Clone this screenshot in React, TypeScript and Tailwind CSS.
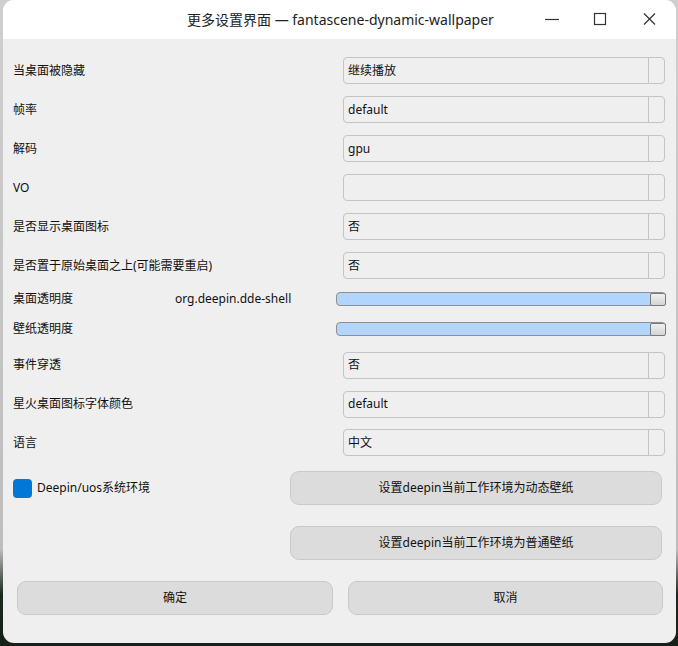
import React from "react";

const FONT = "font-['Noto_Sans','Noto_Sans_CJK_SC',sans-serif]";

function Combo({ value }: { value: string }) {
  return (
    <div className="w-[322px] h-[27px] rounded-[4px] border border-[#c4c4c4] bg-[#efefef] flex items-center">
      <span className="flex-1 pl-[4px] text-[12px] text-[#111] truncate">{value}</span>
      <div className="w-[16px] h-full border-l border-[#c4c4c4]" />
    </div>
  );
}

function Slider() {
  return (
    <div className="w-[330px] h-[14px] rounded-[4px] border border-[#8f8f8f] bg-[#b1d5fd] flex justify-end items-center">
      <div className="w-[16px] h-[13px] rounded-[2px] border border-[#7a7a7a] bg-[linear-gradient(#f0f0f0,#d4d4d4)] -mr-px" />
    </div>
  );
}

function Row({ label, children, h = "h-[39px]", mid }: { label: string; children: React.ReactNode; h?: string; mid?: string }) {
  return (
    <div className={`flex items-center ${h}`}>
      <span className="w-[172px] pl-[10px] text-[12px] text-[#111] whitespace-nowrap">{label}</span>
      <span className="w-[168px] text-[12px] text-[#111] whitespace-nowrap">{mid}</span>
      {children}
    </div>
  );
}

export default function App() {
  return (
    <div className={`w-[678px] h-[646px] bg-[linear-gradient(#cfcfcf_0%,#bdbdbd_85%,#1c2a1e_92%,#142018_100%)] ${FONT}`}>
      <div className="ml-[3px] w-[673px] h-[643px] rounded-[11px] overflow-hidden bg-[#efefef] flex flex-col">
        {/* title bar */}
        <div className="h-[39px] bg-white flex items-center relative shrink-0">
          <span className="absolute left-[184px] text-[14px] text-[#222]">更多设置界面 — fantascene-dynamic-wallpaper</span>
          <div className="ml-auto flex items-center text-[#333]">
            <svg width="48" height="39" viewBox="0 0 48 39"><path d="M17 19.5h14" stroke="#333" strokeWidth="1.2" /></svg>
            <svg width="48" height="39" viewBox="0 0 48 39"><rect x="18.5" y="13.5" width="11" height="11" fill="none" stroke="#333" strokeWidth="1.2" /></svg>
            <svg width="52" height="39" viewBox="0 0 52 39"><path d="M20 13.5l11 11M31 13.5l-11 11" stroke="#333" strokeWidth="1.2" /></svg>
          </div>
        </div>

        {/* body */}
        <div className="flex flex-col pt-[12px]">
          <Row label="当桌面被隐藏"><Combo value="继续播放" /></Row>
          <Row label="帧率"><Combo value="default" /></Row>
          <Row label="解码"><Combo value="gpu" /></Row>
          <Row label="VO"><Combo value="" /></Row>
          <Row label="是否显示桌面图标"><Combo value="否" /></Row>
          <Row label="是否置于原始桌面之上(可能需要重启)"><Combo value="否" /></Row>
          <Row label="桌面透明度" h="h-[28px]" mid="org.deepin.dde-shell">
            <div className="-ml-[7px]"><Slider /></div>
          </Row>
          <Row label="壁纸透明度" h="h-[32px]">
            <div className="-ml-[7px]"><Slider /></div>
          </Row>
          <Row label="事件穿透" h="h-[40px]"><Combo value="否" /></Row>
          <Row label="星火桌面图标字体颜色" h="h-[38px]"><Combo value="default" /></Row>
          <Row label="语言" h="h-[39px]"><Combo value="中文" /></Row>

          <div className="flex items-start mt-[9px]">
            <div className="w-[287px] pl-[10px] h-[34px] flex items-center gap-[5px]">
              <div className="w-[19px] h-[19px] rounded-[4px] bg-[#0078d7]" />
              <span className="text-[12px] text-[#111]">Deepin/uos系统环境</span>
            </div>
            <div className="flex flex-col gap-[21px]">
              <button className="w-[372px] h-[34px] rounded-[9px] border border-[#c9c9c9] bg-[#dcdcdc] text-[12px] text-[#111]">设置deepin当前工作环境为动态壁纸</button>
              <button className="w-[372px] h-[34px] rounded-[9px] border border-[#c9c9c9] bg-[#dcdcdc] text-[12px] text-[#111]">设置deepin当前工作环境为普通壁纸</button>
            </div>
          </div>

          <div className="flex gap-[15px] pl-[14px] mt-[21px]">
            <button className="w-[316px] h-[34px] rounded-[9px] border border-[#c9c9c9] bg-[#dcdcdc] text-[12px] text-[#111]">确定</button>
            <button className="w-[315px] h-[34px] rounded-[9px] border border-[#c9c9c9] bg-[#dcdcdc] text-[12px] text-[#111]">取消</button>
          </div>
        </div>
      </div>
    </div>
  );
}
